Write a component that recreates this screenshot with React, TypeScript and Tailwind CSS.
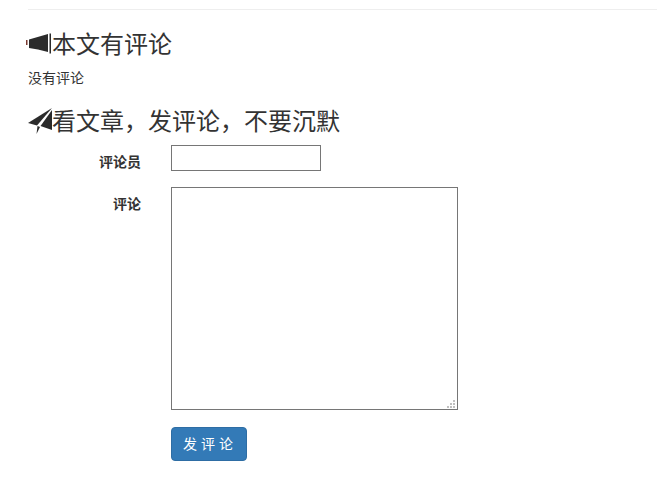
export default function App() {
  const font = { fontFamily: '"Liberation Sans", "Noto Sans CJK SC", sans-serif' };
  return (
    <div className="w-[657px] h-[503px] overflow-hidden bg-white pl-[28px] pt-[9px] text-[14px] text-[#333]" style={font}>
      <div className="h-px bg-[#eeeeee]" />
      <h2 className="flex items-center h-[34px] mt-[18px] text-[24px] leading-[34px] font-normal text-[#333]">
        <svg className="w-[26px] h-[24px] -ml-[2px] shrink-0" viewBox="0 0 26 24" fill="#2b2b2b">
          <rect x="0" y="7" width="1.5" height="5" fill="#7a3a30" />
          <path d="M3 6.5 L22 1 L22 19 L12 16.5 L3 15 Z" />
          <rect x="23.5" y="0.5" width="1.5" height="20" />
        </svg>
        <span>本文有评论</span>
      </h2>
      <p className="mt-[6px] h-[20px] leading-[20px] text-[14px] text-[#333]">没有评论</p>
      <h2 className="flex items-center h-[34px] mt-[17px] text-[24px] leading-[34px] font-normal text-[#333]">
        <svg className="w-[24px] h-[24px] shrink-0 overflow-visible" viewBox="0 0 24 24" fill="#2b2b2b">
          <path d="M0 13 L24 -2 L9 15.5 Z" />
          <path d="M24 0 L24 20 L12.5 16 Z" />
          <path d="M9.5 16 L12 17 L8.5 24 Z" />
        </svg>
        <span>{"看文章\uFF0C发评论\uFF0C不要沉默"}</span>
      </h2>
      <form className="-ml-[28px] mt-[6px]">
        <div className="flex items-start">
          <label className="w-[141px] text-right font-bold text-[14px] leading-[20px] pt-[7px] text-[#333]">评论员</label>
          <input className="ml-[30px] w-[150px] h-[26px] border border-[#767676] bg-white outline-none" />
        </div>
        <div className="flex items-start mt-[15px]">
          <label className="w-[141px] text-right font-bold text-[14px] leading-[20px] pt-[7px] text-[#333]">评论</label>
          <div className="relative ml-[30px] w-[287px] h-[223px]">
            <textarea className="block w-full h-full border border-[#767676] bg-white outline-none resize-none" />
            <svg className="absolute right-[3px] bottom-[2px] w-[8px] h-[8px]" viewBox="0 0 8 8" fill="#c0c0c0">
              <rect x="6" y="0" width="2" height="2" />
              <rect x="3" y="3" width="2" height="2" />
              <rect x="6" y="3" width="2" height="2" />
              <rect x="0" y="6" width="2" height="2" />
              <rect x="3" y="6" width="2" height="2" />
              <rect x="6" y="6" width="2" height="2" />
            </svg>
          </div>
        </div>
        <div className="pl-[171px] mt-[17px]">
          <button type="button" className="w-[76px] h-[34px] pl-[2px] rounded-[4px] border border-[#2e6da4] bg-[#337ab7] text-white text-[14px] tracking-[4px]">发评论</button>
        </div>
      </form>
    </div>
  );
}
